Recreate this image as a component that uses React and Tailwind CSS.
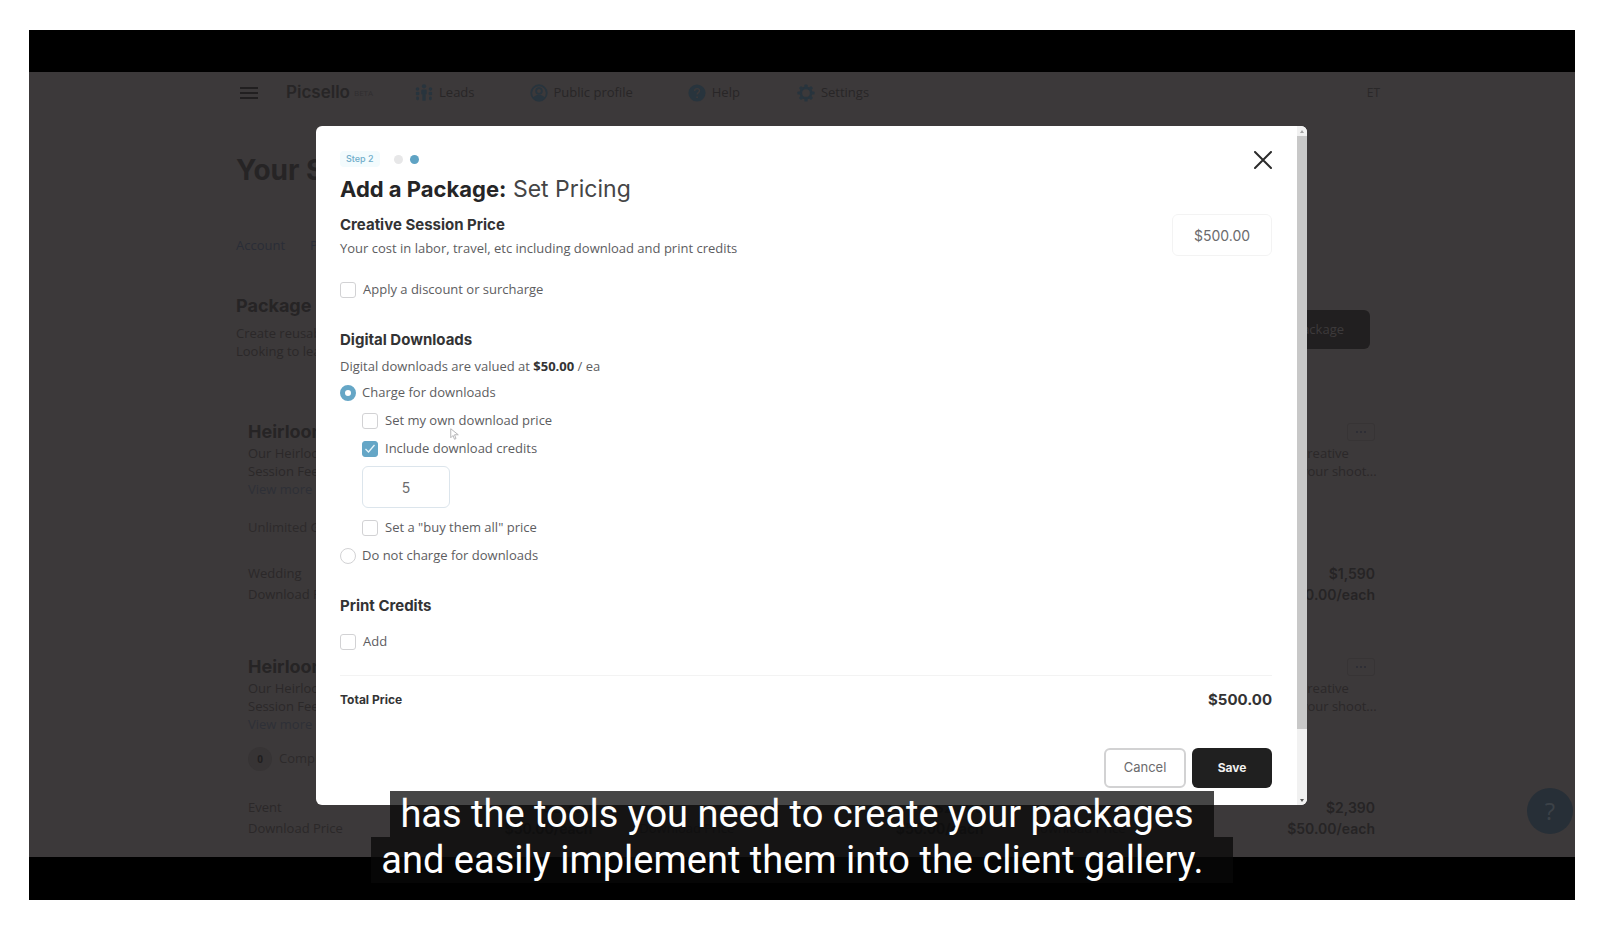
import React from "react";

const navItems = [
  {
    label: "Leads",
    gap: "ml-[42px]",
    icon: (
      <g>
        <circle cx="2.800" cy="5.500" r="2" />
        <circle cx="10" cy="2.600" r="2.400" />
        <circle cx="17.200" cy="5.500" r="2" />
        <rect x="1" y="8.500" width="3.800" height="4" rx="1.200" />
        <rect x="1.400" y="14" width="3" height="4" rx="1.200" />
        <path d="M7 7.500a1.500 1.500 0 0 1 1.500-1.500h3a1.500 1.500 0 0 1 1.500 1.500v4h-1.200v7h-3.600v-7H7z" />
        <rect x="15.200" y="8.500" width="3.800" height="4" rx="1.200" />
        <rect x="15.600" y="14" width="3" height="4" rx="1.200" />
      </g>
    ),
  },
  {
    label: "Public profile",
    gap: "ml-[55px]",
    icon: (
      <g>
        <circle cx="10" cy="10" r="8.600" fill="none" stroke="currentColor" strokeWidth="2" />
        <circle cx="10" cy="7.800" r="3.200" fill="none" stroke="currentColor" strokeWidth="2" />
        <path d="M3.500 15.500c2-3 4-3.200 6.500-3.200s4.500.2 6.500 3.200c-3.500 4.200-9.500 4.200-13 0z" />
      </g>
    ),
  },
  {
    label: "Help",
    gap: "ml-[55px]",
    icon: (
      <g>
        <circle cx="10" cy="10" r="9.500" />
        <path
          d="M7.300 7.800c.2-3.600 5.600-3.400 5.500-.2 0 1.900-2.700 2.100-2.700 4.200"
          fill="none"
          stroke="#3c393a"
          strokeWidth="1.600"
        />
        <circle cx="10.100" cy="14.700" r="1.100" fill="#3c393a" />
      </g>
    ),
  },
  {
    label: "Settings",
    gap: "ml-[57px]",
    icon: (
      <g>
        <circle cx="10" cy="10" r="5.700" fill="none" stroke="currentColor" strokeWidth="2.800" />
        {[0, 45, 90, 135, 180, 225, 270, 315].map((a) => (
          <rect key={a} x="8.200" y="0.500" width="3.600" height="4" rx="1" transform={`rotate(${a} 10 10)`} />
        ))}
      </g>
    ),
  },
];

const cards = [
  { id: "a", kind: "Wedding", price: "$1,590", space: "mt-[60px]" },
  { id: "b", kind: "Event", price: "$2,390", space: "mt-[50px]", badge: true },
];

function PackageCard({ card }) {
  return (
    <article className="min-w-0">
      <div className="flex h-6 items-center justify-between">
        <h3 className="font-['Inter',sans-serif] text-[18px] font-bold leading-6 text-[#262425]">Heirloom</h3>
        <button
          type="button"
          aria-label="Package actions"
          className="flex h-[18px] w-7 items-center justify-center gap-[2px] rounded-[3px] border border-[#373435]"
        >
          <i className="size-[2px] rounded-full bg-[#2a2b35]" />
          <i className="size-[2px] rounded-full bg-[#2a2b35]" />
          <i className="size-[2px] rounded-full bg-[#2a2b35]" />
        </button>
      </div>
      <p className="whitespace-nowrap leading-[18px] text-[#2b2829]">
        Our Heirloom Collection has everything: the Creative
        <br />
        Session Fee, planning and all of the prints of your shoot...
      </p>
      <a href="#more" className="block leading-[18px] text-[#2e3037]">
        View more
      </a>
      {card.badge ? (
        <div className="mt-[14px] flex h-6 items-center gap-[7px]">
          <span className="flex size-6 items-center justify-center rounded-full bg-[#373435] text-[10px] font-bold text-[#201e1f]">
            0
          </span>
          <span className="text-[#2d2a2b]">Complimentary prints</span>
        </div>
      ) : (
        <p className="mt-[19px] leading-5 text-[#2d2a2b]">Unlimited Gallery downloads</p>
      )}
      <dl className="mt-[26px] grid grid-cols-[1fr_auto] leading-[21px]">
        <dt className="text-[#2b2829]">{card.kind}</dt>
        <dd className="text-right font-['Inter',sans-serif] text-sm font-semibold leading-[21px] text-[#262425]">
          {card.price}
        </dd>
        <dt className="text-[#2b2829]">Download Price</dt>
        <dd className="text-right font-['Inter',sans-serif] text-sm font-semibold leading-[21px] text-[#262425]">
          $50.00/each
        </dd>
      </dl>
    </article>
  );
}

function SettingsPage() {
  return (
    <div className="bg-[#3c393a] pb-[18px] pl-[207px] pr-[200px] text-[13px]">
      <nav className="flex h-[42px] items-center pl-1 text-[#272526]">
        <button type="button" aria-label="Menu" className="flex w-[18px] flex-col gap-[3px]">
          <i className="h-[2px] bg-[#211f20]" />
          <i className="h-[2px] bg-[#211f20]" />
          <i className="h-[2px] bg-[#211f20]" />
        </button>
        <span className="ml-7 font-['Inter',sans-serif] text-[17px] font-semibold text-[#272526]">Picsello</span>
        <span className="ml-1 text-[8px] text-[#302e30]">BETA</span>
        {navItems.map((item) => (
          <a
            key={item.label}
            href={"#" + item.label}
            className={"flex items-center gap-[6px] whitespace-nowrap text-[#282627] " + item.gap}
          >
            <svg viewBox="0 0 20 20" className="size-[18px] text-[#28343d]" fill="currentColor" aria-hidden="true">
              {item.icon}
            </svg>
            {item.label}
          </a>
        ))}
        <span className="-mr-[5px] ml-auto text-xs text-[#2a2829]">ET</span>
      </nav>

      <h1 className="mt-[38px] font-['Inter',sans-serif] text-[28px] font-bold leading-9 text-[#262425]">
        Your Settings
      </h1>
      <div className="mt-[47px] flex gap-[25px] leading-5 text-[#2a2d37]">
        <a href="#account">Account</a>
        <a href="#packages">Package Templates</a>
      </div>

      <div className="mt-[39px] flex items-start justify-between">
        <div>
          <h2 className="font-['Inter',sans-serif] text-[18px] font-bold leading-6 text-[#262425]">
            Package Templates
          </h2>
          <p className="mt-[6px] leading-[18px] text-[#2b2829]">
            Create reusable pricing and shoot templates.
            <br />
            Looking to learn more about your pricing?
          </p>
        </div>
        <button
          type="button"
          className="mr-[5px] mt-4 h-[39px] rounded-md bg-[#211f20] px-[26px] text-[#3d3a3b]"
        >
          Add a package
        </button>
      </div>

      {cards.map((card) => (
        <section key={card.id} className={"grid grid-cols-3 gap-[47px] pl-3 " + card.space}>
          <PackageCard card={card} />
          <PackageCard card={card} />
          <PackageCard card={card} />
        </section>
      ))}
    </div>
  );
}

function Check({ label, checked = false }) {
  return (
    <label className="flex h-7 w-fit items-center gap-[7px]">
      <span className="grid size-4">
        <input
          type="checkbox"
          defaultChecked={checked}
          className="peer col-start-1 row-start-1 size-4 appearance-none rounded-[3px] border border-[#d2d2d4] bg-white checked:border-[#65a6c6] checked:bg-[#65a6c6]"
        />
        <svg
          viewBox="0 0 16 16"
          className="pointer-events-none invisible col-start-1 row-start-1 size-4 peer-checked:visible"
          fill="none"
          stroke="#e6f5fb"
          strokeWidth="1.300"
          aria-hidden="true"
        >
          <path d="M3.500 8l3 3 6-7" />
        </svg>
      </span>
      {label}
    </label>
  );
}

function Radio({ label, checked = false }) {
  return (
    <label className="flex h-7 w-fit items-center gap-[6px]">
      <input
        type="radio"
        name="charge"
        defaultChecked={checked}
        className="size-4 appearance-none rounded-full border border-[#d2d2d4] bg-white checked:border-[5px] checked:border-[#65a6c6]"
      />
      {label}
    </label>
  );
}

function PricingDialog() {
  return (
    <div
      role="dialog"
      aria-label="Add a Package"
      className="flex w-full overflow-hidden rounded-md bg-white text-[13px] text-[#5d5d5f]"
    >
      <form className="min-w-0 flex-1 pb-[17px] pl-6 pr-[25px] pt-[25px]">
        <header className="flex items-start justify-between">
          <div>
            <div className="flex h-4 items-center">
              <span className="rounded-sm bg-[#f3fbfd] px-[6px] font-['Inter',sans-serif] text-[9px] font-medium leading-4 text-[#6fadca]">
                Step 2
              </span>
              <i className="ml-[14px] size-[9px] rounded-full bg-[#e7e7e8]" />
              <i className="ml-[7px] size-[9px] rounded-full bg-[#5fa3c4]" />
            </div>
            <h2 className="mt-2 font-['Inter',sans-serif] text-[23px] leading-7 text-[#454546]">
              <strong className="text-[22px] font-bold text-[#252526]">Add a Package:</strong> Set Pricing
            </h2>
          </div>
          <button type="button" aria-label="Close">
            <svg viewBox="0 0 18 18" className="size-[18px]" fill="none" stroke="#2b2b2b" strokeWidth="2" strokeLinecap="round">
              <path d="M1 1l16 16M17 1L1 17" />
            </svg>
          </button>
        </header>

        <div className="mt-[11px] flex h-11 items-start justify-between">
          <div>
            <label
              htmlFor="price"
              className="mt-px block font-['Inter',sans-serif] text-[15px] font-bold leading-5 text-[#333334]"
            >
              Creative Session Price
            </label>
            <p className="mt-[3px] leading-5">
              Your cost in labor, travel, etc including download and print credits
            </p>
          </div>
          <input
            id="price"
            defaultValue="$500.00"
            className="h-[42px] w-[100px] rounded-md border border-[#f3f3f3] text-center font-['Inter',sans-serif] text-sm text-[#6b6b6d]"
          />
        </div>

        <div className="mt-[18px]">
          <Check label="Apply a discount or surcharge" />
        </div>

        <h3 className="mt-[26px] font-['Inter',sans-serif] text-[15px] font-bold leading-5 text-[#333334]">
          Digital Downloads
        </h3>
        <p className="mt-[6px] leading-5">
          Digital downloads are valued at <strong className="text-[#333334]">$50.00</strong> / ea
        </p>
        <div className="mt-[3px]">
          <Radio label="Charge for downloads" checked />
          <div className="pl-[22px]">
            <Check label="Set my own download price" />
            <Check label="Include download credits" checked />
            <input
              aria-label="Download credits"
              defaultValue="5"
              className="mb-[6px] mt-[3px] block h-[42px] w-[88px] rounded-md border border-[#dce5ec] text-center font-['Inter',sans-serif] text-sm text-[#6b6b6d]"
            />
            <Check label={'Set a "buy them all" price'} />
          </div>
          <Radio label="Do not charge for downloads" />
        </div>

        <h3 className="mb-3 mt-[26px] font-['Inter',sans-serif] text-[15px] font-bold leading-5 text-[#333334]">
          Print Credits
        </h3>
        <Check label="Add" />

        <div className="mt-[19px] flex items-center justify-between border-t border-[#f3f3f3] pt-[14px] font-['Inter',sans-serif] text-[#333334]">
          <span className="text-xs font-bold leading-5">Total Price</span>
          <output className="text-[15px] font-bold leading-5">$500.00</output>
        </div>

        <div className="mt-[38px] flex justify-end gap-[6px] font-['Inter',sans-serif]">
          <button type="button" className="h-10 w-[82px] rounded-md border-2 border-[#d2d2d3] bg-white text-[#6b6b6d]">
            Cancel
          </button>
          <button type="button" className="h-10 w-20 rounded-md bg-[#202020] text-xs font-bold text-[#f0f0f0]">
            Save
          </button>
        </div>
      </form>

      <div className="flex w-[10px] flex-col items-center bg-[#f1f1f1]" aria-hidden="true">
        <svg viewBox="0 0 10 10" className="h-[10px] w-[10px] shrink-0" fill="#a3a3a3">
          <path d="M3 7h4L5 4z" />
        </svg>
        <div className="w-[10px] flex-[9] bg-[#c8c8c8]" />
        <div className="flex-1" />
        <svg viewBox="0 0 10 10" className="h-[10px] w-[10px] shrink-0" fill="#555555">
          <path d="M3 4h4L5 7z" />
        </svg>
      </div>
    </div>
  );
}

export default function App() {
  return (
    <main className="min-h-screen bg-white pb-[38px] pl-[29px] pr-[43px] pt-[30px] font-['Open_Sans',sans-serif]">
      <div className="relative overflow-hidden bg-black pb-[43px] pt-[42px]">
        <SettingsPage />

        <div className="absolute inset-x-0 top-24 flex pl-[287px] pr-[268px]">
          <PricingDialog />
        </div>

        <svg viewBox="0 0 12 16" className="absolute left-[421px] top-[398px] h-3 w-[9px]" aria-hidden="true">
          <path
            d="M1 1v12l3-3 2 5 2-1-2-5h5z"
            fill="#ffffff"
            stroke="#b4b4b6"
            strokeWidth="1.300"
            strokeLinejoin="round"
          />
        </svg>

        <button
          type="button"
          aria-label="Help"
          className="absolute bottom-[66px] right-[2px] flex size-[46px] items-center justify-center rounded-full bg-[#272f37] text-2xl text-[#3c4248]"
        >
          ?
        </button>

        <p className="absolute inset-x-0 bottom-[17px] flex flex-col items-center font-['Roboto',sans-serif] text-[38px] leading-[46px] text-white">
          <span className="whitespace-nowrap bg-[#080808]/75 pl-[10px] pr-5">
            has the tools you need to create your packages
          </span>
          <span className="whitespace-nowrap bg-[#080808]/75 pl-[10px] pr-[29px]">
            and easily implement them into the client gallery.
          </span>
        </p>
      </div>
    </main>
  );
}
